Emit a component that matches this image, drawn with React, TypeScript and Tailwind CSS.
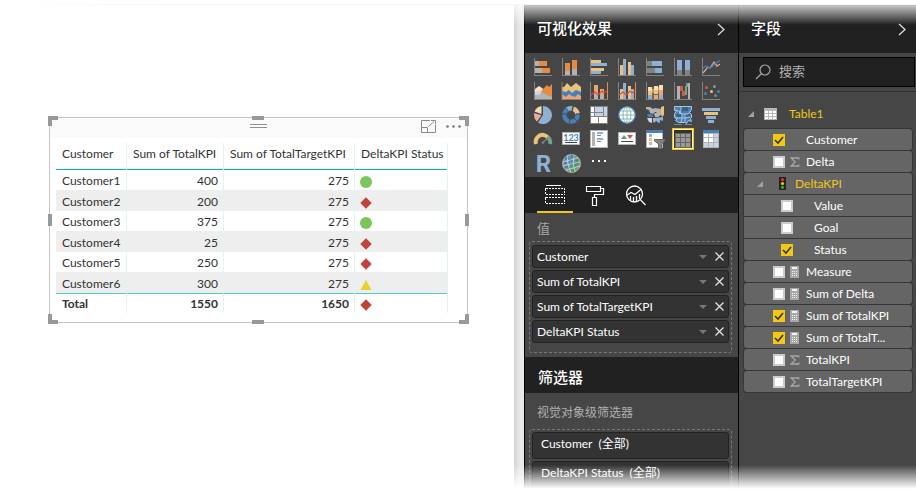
import React from "react";

const FONT = "font-['Lato','Noto_Sans_CJK_SC',sans-serif]";

type Status = "good" | "bad" | "warn";

const rows: { name: string; kpi: number; target: number; status: Status }[] = [
  { name: "Customer1", kpi: 400, target: 275, status: "good" },
  { name: "Customer2", kpi: 200, target: 275, status: "bad" },
  { name: "Customer3", kpi: 375, target: 275, status: "good" },
  { name: "Customer4", kpi: 25, target: 275, status: "bad" },
  { name: "Customer5", kpi: 250, target: 275, status: "bad" },
  { name: "Customer6", kpi: 300, target: 275, status: "warn" },
];

function StatusIcon({ status }: { status: Status }) {
  return (
    <svg width="12" height="12" viewBox="0 0 12 12" className="block" role="img" aria-label={status}>
      {status === "good" && <circle cx="6" cy="6" r="6" fill="#7ac65b" />}
      {status === "bad" && <path d="M6 0.3L11.7 6L6 11.7L0.3 6Z" fill="#c0443b" />}
      {status === "warn" && <path d="M6 1L11.5 11H0.5Z" fill="#e8d22d" />}
    </svg>
  );
}

/* ---------- visual gallery icons, 18 x 18 ---------- */

const OR = "#e58b42";
const YE = "#ebc27c";
const BL = "#8fb0d5";
const DB = "#4680bd";
const GR = "#b3b3b3";
const DG = "#828282";

type Bar = [number, number, number, number, string];

function Bars({ bars }: { bars: Bar[] }) {
  return (
    <g shapeRendering="crispEdges">
      {bars.map(([x, y, w, h, fill], i) => (
        <rect key={i} x={x} y={y} width={w} height={h} fill={fill} />
      ))}
    </g>
  );
}

const Axis = () => (
  <g fill={DG} shapeRendering="crispEdges">
    <rect x="0" y="0" width="1" height="18" />
    <rect x="0" y="17" width="18" height="1" />
  </g>
);

const gallery: { name: string; art: React.ReactNode }[] = [
  { name: "Stacked bar chart", art: <><Bars bars={[[1, 3, 4, 5, GR], [5, 3, 8, 5, OR], [1, 10, 7, 5, GR], [8, 10, 8, 5, OR]]} /><Axis /></> },
  { name: "Stacked column chart", art: <><Bars bars={[[3, 5, 5, 8, OR], [3, 13, 5, 4, GR], [10, 2, 5, 9, OR], [10, 11, 5, 6, GR]]} /><Axis /></> },
  { name: "Clustered bar chart", art: <><Bars bars={[[1, 2, 10, 3, YE], [1, 5, 16, 3, BL], [1, 10, 13, 3, YE], [1, 13, 10, 3, BL]]} /><Axis /></> },
  { name: "Clustered column chart", art: <><Bars bars={[[2, 7, 3, 10, YE], [5, 1, 3, 16, BL], [10, 4, 3, 13, YE], [13, 7, 3, 10, BL]]} /><Axis /></> },
  { name: "100% stacked bar chart", art: <><Bars bars={[[1, 3, 5, 5, DG], [6, 3, 10, 5, BL], [1, 10, 8, 5, DG], [9, 10, 7, 5, BL]]} /><Axis /></> },
  { name: "100% stacked column chart", art: <><Bars bars={[[3, 2, 5, 10, BL], [3, 12, 5, 5, DG], [11, 2, 5, 10, BL], [11, 12, 5, 5, DG]]} /><Axis /></> },
  {
    name: "Line chart",
    art: (
      <>
        <Axis />
        <path d="M1 15L6 9L8 10L12 4L15 8L18 6" fill="none" stroke="#e0a594" strokeWidth="1.3" />
        <path d="M1 10L4 8L6 10L10 9L15 4L18 2.5" fill="none" stroke="#4680bd" strokeWidth="1.3" />
      </>
    ),
  },
  {
    name: "Area chart",
    art: (
      <>
        <path d="M1 7L5 4L8 6L11 9V12H1Z" fill="#f7e4c8" />
        <path d="M6 10L13 3L15 5L18 2V15H9Z" fill={OR} />
        <path d="M1 11L7 9.5L12 12.5L18 15V17H1Z" fill={GR} />
        <path d="M1 11L4 9L8 9.5L5 13H1Z" fill="#c3d8e6" />
        <Axis />
      </>
    ),
  },
  {
    name: "Stacked area chart",
    art: (
      <>
        <path d="M0 5L2 5L5 1L9 5L14 1L19 5V17H0Z" fill={YE} />
        <path d="M0 9L4 10L7 8L10 11L14 8L19 10V17H0Z" fill={DB} />
        <path d="M0 12L4 15L7 12L10 14L13 15L16 12L19 14V17H0Z" fill="#f0a46e" />
        <path d="M0 17.5H19M0 0V18" stroke={DG} fill="none" />
      </>
    ),
  },
  {
    name: "Line and stacked column chart",
    art: (
      <>
        <Bars bars={[[4, 3, 4, 9, "#f0a46e"], [4, 12, 4, 5, GR], [10, 7, 4, 6, "#f0a46e"], [10, 12, 4, 5, GR], [17, 0, 1, 18, OR]]} />
        <path d="M1 13L5 10L8 13L12 9L14 11L17 9" fill="none" stroke="#d4513b" strokeWidth="1.2" />
        <Axis />
      </>
    ),
  },
  {
    name: "Line and clustered column chart",
    art: (
      <>
        <Bars bars={[[2, 7, 3, 10, YE], [5, 1, 3, 16, BL], [10, 4, 3, 13, YE], [13, 7, 3, 10, BL], [17, 0, 1, 18, OR]]} />
        <path d="M1 13L5 10L8 13L12 9L14 11L17 9" fill="none" stroke="#d4513b" strokeWidth="1.2" />
        <Axis />
      </>
    ),
  },
  {
    name: "Ribbon chart",
    art: (
      <>
        <Bars bars={[[2, 5, 15, 12, "#7d6350"], [2, 5, 4, 4, "#f7dfb8"], [2, 9, 4, 4, YE], [2, 13, 4, 4, BL], [6, 7, 2, 4, "#bd9264"], [8, 4, 4, 4, "#f7dfb8"], [8, 8, 4, 4, "#e9c091"], [8, 13, 4, 4, "#f0a46e"], [12, 5, 1, 5, "#bd9264"], [13, 3, 4, 5, "#f7dfb8"], [13, 8, 4, 5, "#f0a46e"], [13, 13, 4, 4, BL]]} />
        <Axis />
      </>
    ),
  },
  { name: "Waterfall chart", art: <><Bars bars={[[3, 4, 3, 13, GR], [6, 4, 3, 5, "#d4593f"], [8, 9, 3, 5, "#d4593f"], [11, 4, 2, 9, "#70a48f"], [12, 1, 3, 4, "#70a48f"], [14, 1, 2, 16, GR]]} /><Axis /></> },
  {
    name: "Scatter chart",
    art: (
      <>
        <Axis />
        <circle cx="4.5" cy="5.5" r="1.5" fill="#d4593f" />
        <circle cx="12.5" cy="4.5" r="1.5" fill="#70a48f" />
        <circle cx="9.5" cy="9.5" r="1.5" fill={YE} />
        <circle cx="16.5" cy="9.5" r="1.5" fill={DB} />
        <circle cx="3.5" cy="11.5" r="1.5" fill={DB} />
        <circle cx="13.5" cy="13.5" r="1.5" fill={DG} />
      </>
    ),
  },
  {
    name: "Pie chart",
    art: (
      <>
        <path d="M9 9V0A9 9 0 1 1 4 16.5Z" fill={BL} />
        <path d="M7.5 8V0A9 9 0 0 0 0.5 5.5Z" fill="#f1dcb8" />
        <path d="M7.5 9.3L0.2 7A9 9 0 0 0 3 15.5Z" fill="#e8ab9d" />
      </>
    ),
  },
  {
    name: "Donut chart",
    art: (
      <g fill="none" strokeWidth="4.5">
        <circle cx="9" cy="9" r="6.7" stroke={DB} />
        <path d="M5 3.6A6.7 6.7 0 0 1 10.5 2.5" stroke={BL} />
        <path d="M11.5 2.8A6.7 6.7 0 0 1 15.5 7.5" stroke={YE} />
        <path d="M0 7.8L4.5 8.2M4 2L6.5 5.2M11 0L10 5M14 8H18M12 12L15.5 15.5M7.8 13V18" stroke="#464646" strokeWidth="1" />
      </g>
    ),
  },
  { name: "Treemap", art: <Bars bars={[[0, 0, 18, 18, DG], [1, 1, 3, 5, "#fff"], [1, 7, 3, 3, "#fff"], [5, 1, 8, 5, "#c4d5e9"], [14, 1, 3, 9, "#c4d5e9"], [5, 7, 8, 3, "#c4d5e9"], [1, 11, 7, 6, "#fff"], [9, 11, 8, 6, "#fff"]]} /> },
  {
    name: "Map",
    art: (
      <g fill="none">
        <circle cx="9" cy="9" r="8.3" fill="#fff" stroke="#3f7fc0" strokeWidth="1.2" />
        <g stroke="#8fb8a8">
          <ellipse cx="9" cy="9" rx="4" ry="8" />
          <path d="M9 1V17M1 9H17M2.5 5H15.5M2.5 13H15.5" />
        </g>
      </g>
    ),
  },
  {
    name: "Filled map",
    art: (
      <>
        <path d="M0 1H4L7 3L9 2L15 3V6H9L7 8L4 7L3 4L0 3Z" fill={GR} />
        <path d="M15 1L18 0V9L16 11L15 8Z" fill={YE} />
        <path d="M1 8H5L7 9V11H2Z" fill={DB} />
        <path d="M8 8L11 6H15V9L12 11H9Z" fill={GR} />
        <path d="M1 12H6V17L3 16Z" fill="#d8d8d8" />
        <path d="M7 12H11V14L8 17L7 15Z" fill={GR} />
        <path d="M9 12L17 11V15L14 14V17L11 16Z" fill={BL} />
      </>
    ),
  },
  {
    name: "Shape map",
    art: (
      <>
        <path d="M0.5 0.5H17.5V3.5L15.5 6.5L17.5 8.5V11.5L16.5 12.5L17.5 15.5L14.5 14.5L12.5 17.5L10.5 16.5H4.5L1.5 14.5L3.5 12.5L0.5 11.5V7.5L2.5 5.5L0.5 4.5Z" fill={DB} stroke="#a9c8df" />
        <path d="M7 1H14V5H9L7 7ZM10 8H16V11L12 12H10ZM2 8H8V11H3Z" fill="#46607a" />
        <path d="M1 4L5 5L8 8H14L17 5M7 1V5L5 7L8 8M1 12H9L11 12L16 11M8 8V12L7 17M11 8V16" fill="none" stroke="#a9c8df" />
        <path d="M0 18.5H8M11 18.5H18" stroke={DG} />
      </>
    ),
  },
  { name: "Funnel", art: <Bars bars={[[0, 2, 18, 3, BL], [2, 6, 14, 3, YE], [4, 10, 10, 3, BL], [6, 14, 6, 3, BL]]} /> },
  {
    name: "Gauge",
    art: (
      <g fill="none" strokeWidth="4">
        <path d="M2 14A7 7 0 0 1 10 5" stroke={YE} />
        <path d="M9 5A7 7 0 0 1 14 7.5" stroke={YE} />
        <path d="M13.5 7A7 7 0 0 1 16 14" stroke="#70a48f" />
        <path d="M8 13L14 8" stroke={DG} strokeWidth="1.4" />
        <circle cx="9" cy="12.5" r="1.3" fill={DG} stroke="none" />
      </g>
    ),
  },
  {
    name: "Card",
    art: (
      <>
        <rect x="0.5" y="2.5" width="17" height="12" fill="#fff" stroke={GR} />
        <text x="9" y="11" fontSize="9" fontWeight="700" textAnchor="middle" fill={DB}>123</text>
        <Bars bars={[[3, 12, 12, 1, "#444"]]} />
      </>
    ),
  },
  { name: "Multi-row card", art: <Bars bars={[[0, 0, 18, 18, GR], [1, 1, 16, 16, "#fff"], [2, 2, 3, 14, GR], [7, 2, 6, 2, BL], [7, 5, 4, 1, DG], [7, 8, 6, 2, BL], [7, 11, 4, 1, DG]]} /> },
  {
    name: "KPI",
    art: (
      <>
        <rect x="0.5" y="2.5" width="17" height="12" fill="#fff" stroke={GR} />
        <path d="M3 9L6 5L9 9Z" fill="#5b9c84" />
        <path d="M9 5H15L12 9Z" fill="#d4593f" />
        <Bars bars={[[3, 11, 12, 1, "#444"]]} />
      </>
    ),
  },
  {
    name: "Slicer",
    art: (
      <>
        <Bars bars={[[0, 0, 17, 18, GR], [1, 3, 15, 14, "#fff"], [0, 0, 17, 3, DB], [3, 4, 3, 3, BL], [3, 8, 3, 3, YE], [3, 12, 3, 3, "#e8ab9d"]]} />
        <path d="M8.5 9.5H18.5V11L15.5 14V18.5H12.5V14L8.5 11Z" fill={DG} stroke="#6a6a6a" />
      </>
    ),
  },
  {
    name: "Table",
    art: (
      <>
        <Bars bars={[[-2, -2, 22, 22, "#f2c811"], [-1, -1, 20, 20, "#fff4c0"], [0, 0, 18, 18, "#333"], [1, 3, 16, 15, "#656565"], [2, 4, 4, 3, "#999"], [7, 4, 4, 3, "#999"], [12, 4, 4, 3, "#999"], [2, 8, 4, 4, "#999"], [7, 8, 4, 4, "#999"], [12, 8, 4, 4, "#999"], [2, 13, 4, 4, "#999"], [7, 13, 4, 4, "#999"], [12, 13, 4, 4, "#999"]]} />
      </>
    ),
  },
  { name: "Matrix", art: <Bars bars={[[1, 0, 16, 3, DB], [1, 3, 16, 15, GR], [2, 4, 4, 3, "#fff"], [7, 4, 4, 3, "#fff"], [12, 4, 4, 3, "#c4d5e9"], [2, 8, 4, 4, "#fff"], [7, 8, 4, 4, "#fff"], [12, 8, 4, 4, "#c4d5e9"], [2, 13, 4, 4, "#c4d5e9"], [7, 13, 4, 4, "#c4d5e9"], [12, 13, 4, 4, "#c4d5e9"]]} /> },
  {
    name: "R script visual",
    art: <text x="9.5" y="18" fontSize="24" fontWeight="700" textAnchor="middle" fill={BL} className="font-['Liberation_Sans_Narrow','Roboto',sans-serif]">R</text>,
  },
  {
    name: "ArcGIS map",
    art: (
      <g fill="none">
        <circle cx="9.5" cy="9.5" r="9" fill="#8a8f92" stroke="#b0b0b0" />
        <path d="M3 5L7 3M9 2L13 3M2 9L5 8M7 7L11 6M13 5L16 7M3 13L6 12M8 11L12 10" stroke="#2a87c4" strokeWidth="2.4" />
        <path d="M11 14L15 12M12 10L17 9M6 15L9 14M9 17L13 16M14 8L16 8" stroke="#35a048" strokeWidth="2.4" />
        <path d="M1 8Q9 6 16 4M1 12Q10 10 18 8M4 16Q12 14 18 12M6 1Q4 9 9 18M12 1Q10 9 13 18" stroke="#d5dadb" strokeWidth="0.8" />
      </g>
    ),
  },
  { name: "More visuals", art: <Bars bars={[[2, 6, 2, 2, "#fff"], [8, 6, 2, 2, "#fff"], [14, 6, 2, 2, "#fff"]]} /> },
];

/* ---------- small glyphs ---------- */

const Chevron = () => (
  <svg width="8" height="13" viewBox="0 0 8 13" fill="none" stroke="#d8dde2" strokeWidth="1.3" aria-hidden="true">
    <path d="M1 1L7 6.5L1 12" />
  </svg>
);

const Caret = () => (
  <svg width="6" height="6" viewBox="0 0 6 6" aria-hidden="true" className="shrink-0">
    <path d="M6 0V6H0Z" fill="#a0a0a0" />
  </svg>
);

const Sigma = () => (
  <svg width="10" height="10" viewBox="0 0 10 10" fill="none" stroke="#a6a6a6" strokeWidth="1.3" aria-hidden="true">
    <path d="M8.8 2.5V1H1.2L5.2 5L1.2 9H8.8V7.5" />
  </svg>
);

const Calculator = () => (
  <svg width="9" height="12" viewBox="0 0 9 12" shapeRendering="crispEdges" aria-hidden="true">
    <rect width="9" height="12" fill="#a8a8a8" />
    <path d="M2 1H7V3H2ZM2 5H3V6H2ZM4 5H5V6H4ZM6 5H7V6H6ZM2 7H3V8H2ZM4 7H5V8H4ZM6 7H7V8H6ZM2 9H3V10H2ZM4 9H5V10H4ZM6 9H7V10H6Z" fill="#f4f4f4" />
  </svg>
);

/* ---------- report canvas ---------- */

const handle = "absolute border-[#999999]";
const headCell = "border-r border-[#e0f4f2] px-[6px] pb-[6px] text-left font-normal shadow-[inset_0_-1px_0_#01b8aa]";
const bodyCell = "border-r border-[#e0f4f2] pt-0.5 pr-[5px] pl-[6px]";
const footCell = "border-r border-[#e0f4f2] pt-0.5 pr-[5px] pl-[6px] shadow-[inset_0_1px_0_#4fcfc3]";

function TableVisual() {
  return (
    <section className="relative w-[419px] border border-[#c4c4c4] pb-[9px] text-xs text-[#333333]" aria-label="Table visual">
      <div className="relative flex h-5 items-start justify-end gap-[10px] bg-[#fafafa] pt-0.5 pr-[5px]">
        <span className="absolute top-[6px] left-1/2 -ml-[9px] h-1 w-[17px] border-y border-[#8f8f8f]" />
        <button type="button" aria-label="Focus mode">
          <svg width="15" height="13" viewBox="0 0 15 13" fill="none" stroke="#8a8a8a" aria-hidden="true">
            <path d="M9 0.5H0.5V12.5H14.5V5M0.5 7.5H6.5V12.5M7.5 6.5L13 1.5M10 0.5H14.5V4.5" />
          </svg>
        </button>
        <button type="button" aria-label="More options">
          <svg width="16" height="13" viewBox="0 0 16 13" fill="#777" aria-hidden="true">
            <circle cx="1.5" cy="6.5" r="1.3" /><circle cx="7.5" cy="6.5" r="1.3" /><circle cx="13.5" cy="6.5" r="1.3" />
          </svg>
        </button>
      </div>
      <table className="mt-[5px] ml-[6px] w-[392px] table-fixed border-separate border-spacing-0 leading-4">
        <colgroup>
          <col className="w-[71px]" /><col className="w-[97px]" /><col className="w-[131px]" /><col className="w-[93px]" />
        </colgroup>
        <thead>
          <tr className="h-[27px] whitespace-nowrap">
            {["Customer", "Sum of TotalKPI", "Sum of TotalTargetKPI", "DeltaKPI Status"].map((h) => (
              <th key={h} scope="col" className={headCell}>{h}</th>
            ))}
          </tr>
        </thead>
        <tbody>
          {rows.map((r) => (
            <tr key={r.name} className="h-5 even:h-[21px] even:bg-[#eeeeee]">
              <td className={bodyCell}>{r.name}</td>
              <td className={`${bodyCell} text-right`}>{r.kpi}</td>
              <td className={`${bodyCell} text-right`}>{r.target}</td>
              <td className="border-r border-[#e0f4f2] pt-1 pl-[5px]"><StatusIcon status={r.status} /></td>
            </tr>
          ))}
        </tbody>
        <tfoot>
          <tr className="h-5 font-bold">
            <td className={footCell}>Total</td>
            <td className={`${footCell} text-right`}>1550</td>
            <td className={`${footCell} text-right`}>1650</td>
            <td className="border-r border-[#e0f4f2] pt-1 pl-[5px] shadow-[inset_0_1px_0_#4fcfc3]"><StatusIcon status="bad" /></td>
          </tr>
        </tfoot>
      </table>
      <span className={`${handle} -top-0.5 -left-0.5 size-[10px] border-t-4 border-l-4`} />
      <span className={`${handle} -top-0.5 -right-0.5 size-[10px] border-t-4 border-r-4`} />
      <span className={`${handle} -bottom-0.5 -left-0.5 size-[10px] border-b-4 border-l-4`} />
      <span className={`${handle} -right-0.5 -bottom-0.5 size-[10px] border-r-4 border-b-4`} />
      <span className={`${handle} -top-0.5 left-1/2 -ml-[7px] w-3 border-t-4`} />
      <span className={`${handle} -bottom-0.5 left-1/2 -ml-[7px] w-3 border-b-4`} />
      <span className={`${handle} top-1/2 -left-0.5 -mt-[6px] h-3 border-l-4`} />
      <span className={`${handle} top-1/2 -right-0.5 -mt-[6px] h-3 border-r-4`} />
    </section>
  );
}

/* ---------- visualizations pane ---------- */

function PaneHeader({ title, inset }: { title: string; inset: string }) {
  return (
    <header className={`flex h-12 items-center justify-between bg-[#212121] pl-3 ${inset}`}>
      <h2 className="pb-0.5 text-[15px] font-medium text-white">{title}</h2>
      <button type="button" aria-label={`折叠${title}`}><Chevron /></button>
    </header>
  );
}

function FieldChip({ name }: { name: string }) {
  return (
    <li className="flex h-[23px] items-center rounded-[3px] border border-[#222222] bg-[#333333] px-1 text-xs text-white">
      <span className="flex-1 truncate">{name}</span>
      <button type="button" aria-label={`${name} options`} className="mr-2">
        <svg width="8" height="4" viewBox="0 0 8 4" aria-hidden="true"><path d="M0 0H8L4 4Z" fill="#777777" /></svg>
      </button>
      <button type="button" aria-label={`Remove ${name}`}>
        <svg width="9" height="9" viewBox="0 0 9 9" stroke="#e4e8ea" strokeWidth="1.2" aria-hidden="true"><path d="M0.5 0.5L8.5 8.5M8.5 0.5L0.5 8.5" /></svg>
      </button>
    </li>
  );
}

function VisualizationsPane() {
  const tab = "flex h-9 w-9 items-center justify-center border-y-2 border-transparent";
  return (
    <aside className="w-[215px] shrink-0 border-x border-black bg-[#464646]">
      <PaneHeader title="可视化效果" inset="pr-[13px]" />
      <div className="grid grid-cols-7 gap-x-[10px] gap-y-[6px] py-[5px] pr-[18px] pl-[9px]">
        {gallery.map((g) => (
          <button key={g.name} type="button" aria-label={g.name} className="size-[18px]">
            <svg width="18" height="18" viewBox="0 0 18 18" overflow="visible" aria-hidden="true">{g.art}</svg>
          </button>
        ))}
      </div>
      <nav className="flex gap-1 bg-[#212121] pl-3">
        <button type="button" aria-label="Fields" className="flex h-9 w-9 items-center justify-center border-y-2 border-t-transparent border-b-[#f2c811]">
          <svg width="20" height="20" viewBox="0 0 20 20" fill="none" stroke="#fff" shapeRendering="crispEdges" aria-hidden="true">
            <path d="M1 0.5H16" />
            <path d="M0.5 3.5H19.5V9.5H0.5ZM0.5 12.5H19.5V18.5H0.5Z" strokeDasharray="2 1" />
          </svg>
        </button>
        <button type="button" aria-label="Format" className={tab}>
          <svg width="20" height="21" viewBox="0 0 20 21" fill="none" stroke="#fff" strokeWidth="1.2" aria-hidden="true">
            <path d="M1.5 1.5H15.5V6.5H1.5ZM15.5 3.5H18.5V9.5H9.5V12.5M7.5 12.5H11.5V20.5H7.5Z" />
          </svg>
        </button>
        <button type="button" aria-label="Analytics" className={tab}>
          <svg width="21" height="21" viewBox="0 0 21 21" fill="none" stroke="#fff" strokeWidth="1.3" aria-hidden="true">
            <circle cx="9.5" cy="9" r="8" />
            <path d="M15.3 14.6L20.5 20M1.5 10.5L6 7.5L10 9.5L16.5 4" />
            <path d="M5.5 11V15M8.5 12V17M11.5 11V16.5M14.5 9V14" />
          </svg>
        </button>
      </nav>
      <h3 className="px-3 pt-[6px] pb-1 text-[13px] leading-[18px] text-[#a6a6a6]">值</h3>
      <ul className="mr-[6px] ml-1 flex flex-col gap-0.5 rounded-[3px] border border-dashed border-[#777777] px-0.5 pt-[3px] pb-[9px]">
        <FieldChip name="Customer" />
        <FieldChip name="Sum of TotalKPI" />
        <FieldChip name="Sum of TotalTargetKPI" />
        <FieldChip name="DeltaKPI Status" />
      </ul>
      <h2 className="mt-1 flex h-9 items-center bg-[#212121] pt-1 pl-[13px] text-[15px] font-medium text-white">筛选器</h2>
      <h3 className="px-3 pt-[11px] pb-[7px] text-xs leading-[18px] text-[#b0b0b0]">视觉对象级筛选器</h3>
      <ul className="mr-[6px] ml-1 flex flex-col gap-0.5 rounded-[3px] border border-dashed border-[#777777] px-0.5 pt-0.5 text-xs text-white">
        {["Customer", "DeltaKPI Status"].map((name) => (
          <li key={name}>
            <button type="button" className="flex h-[27px] w-full items-center gap-1.5 rounded-[3px] border border-[#222222] bg-[#333333] px-2 pb-[3px]">
              <span>{name}</span><span>(全部)</span>
            </button>
          </li>
        ))}
      </ul>
    </aside>
  );
}

/* ---------- fields pane ---------- */

type FieldProps = { name: string; kind?: "sum" | "calc"; checked?: boolean; nested?: boolean };

function Field({ name, kind, checked, nested }: FieldProps) {
  return (
    <label className={`flex h-[21px] items-center text-xs text-white ${nested ? "pl-[37px]" : "pl-[29px]"}`}>
      <span className="relative flex size-3 shrink-0">
        <input
          type="checkbox"
          defaultChecked={checked}
          className="peer size-3 appearance-none border-2 border-[#cccccc] bg-white checked:border-[#f2c811] checked:bg-[#f2c811]"
        />
        <svg width="12" height="12" viewBox="0 0 12 12" fill="none" stroke="#333" strokeWidth="1.6" className="pointer-events-none absolute inset-0 hidden peer-checked:block" aria-hidden="true">
          <path d="M2 6L5 9L10 3" />
        </svg>
      </span>
      <span className="flex w-[21px] shrink-0 justify-start pl-[5px]">
        {kind === "sum" && <Sigma />}
        {kind === "calc" && <Calculator />}
      </span>
      <span className="whitespace-nowrap">{name}</span>
    </label>
  );
}

const rowBox = "rounded-[3px] bg-[#656565] shadow-[0_0_0_1px_#363636]";

function FieldsPane() {
  return (
    <aside className="w-[177px] shrink-0 bg-[#464646]">
      <PaneHeader title="字段" inset="pr-[10px]" />
      <div className="border-b border-[#333333] pt-1 pr-px pb-1 pl-1">
        <label className="flex h-[30px] items-center gap-2 border border-black bg-[#212121] pl-[11px]">
          <svg width="16" height="16" viewBox="0 0 16 16" fill="none" stroke="#a8a8a8" strokeWidth="1.2" className="shrink-0" aria-hidden="true">
            <circle cx="10" cy="6" r="5" />
            <path d="M6.5 9.5L1 15" />
          </svg>
          <input type="search" aria-label="搜索" placeholder="搜索" className="w-full min-w-0 bg-transparent text-[13px] text-white outline-none placeholder:text-[#b0b0b0]" />
        </label>
      </div>
      <div className="flex h-[37px] items-center pt-[6px] pl-[9px] text-xs text-[#f2c811]">
        <Caret />
        <svg width="13" height="12" viewBox="0 0 13 12" shapeRendering="crispEdges" className="mr-3 ml-[10px]" aria-hidden="true">
          <rect width="13" height="12" fill="#b8b8b8" />
          <path d="M1 3H4V5H1ZM5 3H8V5H5ZM9 3H12V5H9ZM1 6H4V8H1ZM5 6H8V8H5ZM9 6H12V8H9ZM1 9H4V11H1ZM5 9H8V11H5ZM9 9H12V11H9Z" fill="#fff" />
        </svg>
        <span>Table1</span>
      </div>
      <ul className="flex flex-col gap-px pr-1 pl-[5px]">
        <li className={rowBox}><Field name="Customer" checked /></li>
        <li className={rowBox}><Field name="Delta" kind="sum" /></li>
        <li className={rowBox}>
          <div className="flex h-[21px] items-center pl-[13px] text-xs text-[#f2c811]">
            <Caret />
            <svg width="7" height="13" viewBox="0 0 7 13" className="mr-[9px] ml-4" aria-hidden="true">
              <rect width="7" height="13" fill="#222" />
              <circle cx="3.5" cy="2.7" r="1.6" fill="#e0342c" /><circle cx="3.5" cy="6.5" r="1.6" fill="#f2c811" /><circle cx="3.5" cy="10.3" r="1.6" fill="#2fa82f" />
            </svg>
            <span>DeltaKPI</span>
          </div>
          <ul>
            <li className="border-t border-[#363636]"><Field name="Value" nested /></li>
            <li className="border-t border-[#363636]"><Field name="Goal" nested /></li>
            <li className="border-t border-[#363636]"><Field name="Status" nested checked /></li>
          </ul>
        </li>
        <li className={rowBox}><Field name="Measure" kind="calc" /></li>
        <li className={rowBox}><Field name="Sum of Delta" kind="calc" /></li>
        <li className={rowBox}><Field name="Sum of TotalKPI" kind="calc" checked /></li>
        <li className={rowBox}><Field name="Sum of TotalT..." kind="calc" checked /></li>
        <li className={rowBox}><Field name="TotalKPI" kind="sum" /></li>
        <li className={rowBox}><Field name="TotalTargetKPI" kind="sum" /></li>
      </ul>
    </aside>
  );
}

export default function App() {
  return (
    <div className={`relative flex h-screen overflow-hidden bg-white pt-[5px] ${FONT}`}>
      <main className="min-w-0 flex-1 pt-28 pl-[49px]">
        <TableVisual />
      </main>
      <div className="w-[10px] shrink-0 bg-linear-to-r from-[#d4d4d4] to-[#e9e9e9] to-60%" />
      <VisualizationsPane />
      <FieldsPane />
      <div className="pointer-events-none absolute inset-x-0 top-[5px] h-5 bg-linear-to-b from-white/75 to-transparent" />
      <div className="pointer-events-none absolute inset-x-0 bottom-0 h-[25px] bg-linear-to-t from-white from-5% to-transparent" />
      <div className="pointer-events-none absolute top-1 right-0 left-2 h-px bg-linear-to-r from-white to-[#f4f4f4] to-20%" />
    </div>
  );
}
